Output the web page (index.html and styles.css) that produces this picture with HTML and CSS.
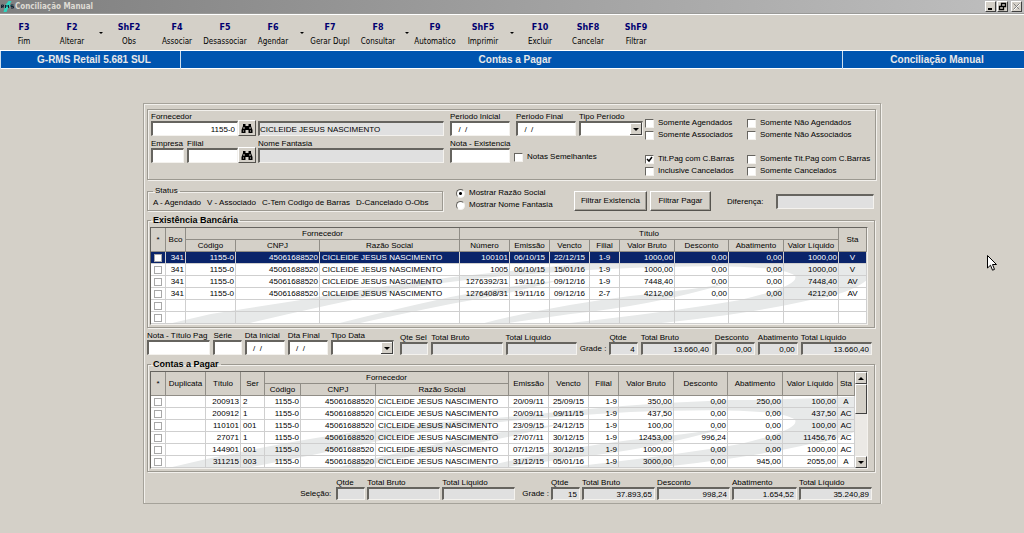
FILE: index.html
```html
<!DOCTYPE html>
<html lang="pt-BR">
<head>
<meta charset="utf-8">
<title>Conciliação Manual</title>
<link rel="stylesheet" href="styles.css">
</head>
<body>
<header class="titlebar">
  <svg class="app-icon" viewBox="0 0 14 13" aria-hidden="true"><path d="M3 12 5 5 8 1h3L9 5h3L8 7l-2 5z" fill="#2fd6c0"/><path d="M1 8V5h2v1.500H1.500L3 8M5 8V5l1.500 1.500L8 5v3M13 5h-2.500v1.500H13V8h-2.500" fill="none" stroke="#123" stroke-width="1"/></svg>
  <h1 class="title">Conciliação Manual</h1>
  <div class="winbtns">
    <button class="winbtn" aria-label="Minimizar"><svg viewBox="0 0 9 9"><path d="M2 7h4" stroke="#000" stroke-width="2"/></svg></button>
    <button class="winbtn" aria-label="Restaurar"><svg viewBox="0 0 9 9"><path d="M3.500 4V1.500h4v3H6M3 1.500h5M1.500 4.500h4v3h-4zM1 4.500h5" fill="none" stroke="#000" stroke-width="1.300"/></svg></button>
    <button class="winbtn winbtn-close" aria-label="Fechar" disabled><svg viewBox="0 0 9 9"><path d="m2 2 6 6M8 2 2 8" stroke="#fff"/><path d="m1.500 1.500 6 6m0-6-6 6" stroke="#808080"/></svg></button>
  </div>
</header>
<nav class="toolbar">
  <button class="tool"><b>F3</b><span>Fim</span></button>
  <button class="tool"><b>F2</b><span>Alterar</span></button>
  <button class="drop" aria-label="Opções de Alterar"></button>
  <button class="tool"><b>ShF2</b><span>Obs</span></button>
  <button class="tool"><b>F4</b><span>Associar</span></button>
  <button class="tool"><b>F5</b><span>Desassociar</span></button>
  <button class="tool"><b>F6</b><span>Agendar</span></button>
  <button class="drop" aria-label="Opções de Agendar"></button>
  <button class="tool"><b>F7</b><span>Gerar Dupl</span></button>
  <button class="tool"><b>F8</b><span>Consultar</span></button>
  <button class="drop" aria-label="Opções de Consultar"></button>
  <button class="tool"><b>F9</b><span>Automatico</span></button>
  <button class="tool"><b>ShF5</b><span>Imprimir</span></button>
  <button class="drop" aria-label="Opções de Imprimir"></button>
  <button class="tool"><b>F10</b><span>Excluir</span></button>
  <button class="tool"><b>ShF8</b><span>Cancelar</span></button>
  <button class="tool"><b>ShF9</b><span>Filtrar</span></button>
</nav>
<div class="banner"><div>G-RMS Retail 5.681 SUL</div><div>Contas a Pagar</div><div>Conciliação Manual</div></div>

<main class="panel">
  <section class="filters etched">
    <div class="filter-fields">
      <div class="row">
        <div class="field w-code"><label for="forn">Fornecedor</label><input id="forn" class="num" value="1155-0"></div>
        <button class="find" aria-label="Buscar fornecedor"><svg viewBox="0 0 12 11"><path d="M2 1h2.500v2h3V1H10v2l1.500 4v3H7.500V7h-3v3H.5V7L2 3z"/><path d="M3 4v2M9 4v2M2 8h1M9 8h1" stroke="#d4d0c8" fill="none"/></svg></button>
        <div class="field grow"><label for="nome">&nbsp;</label><input id="nome" class="ro" readonly value="CICLEIDE JESUS NASCIMENTO"></div>
        <div class="field w-date"><label for="pini">Periodo Inicial</label><input id="pini" value="  /  /"></div>
        <div class="field w-date"><label for="pfim">Periodo Final</label><input id="pfim" value="  /  /"></div>
        <div class="field w-type"><label for="tper">Tipo Período</label><select id="tper"><option></option></select></div>
      </div>
      <div class="row">
        <div class="field w-emp"><label for="emp">Empresa</label><input id="emp"></div>
        <div class="field w-fil"><label for="fil">Filial</label><input id="fil"></div>
        <button class="find" aria-label="Buscar filial"><svg viewBox="0 0 12 11"><path d="M2 1h2.500v2h3V1H10v2l1.500 4v3H7.500V7h-3v3H.5V7L2 3z"/><path d="M3 4v2M9 4v2M2 8h1M9 8h1" stroke="#d4d0c8" fill="none"/></svg></button>
        <div class="field grow"><label for="fant">Nome Fantasia</label><input id="fant" class="ro" readonly></div>
        <div class="field w-date"><label for="nota">Nota - Existencia</label><input id="nota"></div>
        <label class="check w-similar"><input type="checkbox">Notas Semelhantes</label>
      </div>
    </div>
    <div class="checks">
      <label class="check"><input type="checkbox">Somente Agendados</label>
      <label class="check"><input type="checkbox">Somente Não Agendados</label>
      <label class="check"><input type="checkbox">Somente Associados</label>
      <label class="check"><input type="checkbox">Somente Não Associados</label>
      <label class="check second"><input type="checkbox" checked>Tit.Pag com C.Barras</label>
      <label class="check second"><input type="checkbox">Somente Tit.Pag com C.Barras</label>
      <label class="check"><input type="checkbox">Inclusive Cancelados</label>
      <label class="check"><input type="checkbox">Somente Cancelados</label>
    </div>
  </section>

  <section class="options">
    <fieldset class="status etched"><legend>Status</legend><div class="status-list"><span>A - Agendado</span><span>V - Associado</span><span>C-Tem Codigo de Barras</span><span>D-Cancelado O-Obs</span></div></fieldset>
    <div class="radios">
      <label class="check"><input type="radio" name="show" checked>Mostrar Razão Social</label>
      <label class="check"><input type="radio" name="show">Mostrar Nome Fantasia</label>
    </div>
    <div class="actions"><button class="btn btn-wide">Filtrar Existencia</button><button class="btn">Filtrar Pagar</button></div>
    <div class="diff"><label for="dif">Diferença:</label><input id="dif" class="ro dif" readonly></div>
  </section>

  <fieldset class="group etched">
    <legend>Existência Bancária</legend>
    <div class="grid-wrap">
      <svg class="swoosh" viewBox="0 0 717 72" preserveAspectRatio="none" aria-hidden="true"><path d="M17 72 60 62 150 48Q260 28 370 18 470 6 580 4 650 4 717 0V28Q700 42 660 48 600 62 500 72H410Q520 60 590 48 650 34 645 24 630 10 480 16 340 22 260 36 170 54 95 72zM185 72Q240 58 300 45 350 35 410 28 360 42 300 52 250 62 205 72zM330 72Q400 54 480 44 540 38 575 32 500 54 420 62L350 72z"/></svg>
      <table class="grid">
        <colgroup><col class="c15"><col class="c20"><col class="c50"><col class="c84"><col><col class="c50"><col class="c40"><col class="c40"><col class="c30"><col class="c55"><col class="c54"><col class="c55"><col class="c55"><col class="c28"></colgroup>
        <thead>
          <tr><th rowspan="2">*</th><th rowspan="2">Bco</th><th colspan="3">Fornecedor</th><th colspan="8">Título</th><th rowspan="2">Sta</th></tr>
          <tr><th>Código</th><th>CNPJ</th><th>Razão Social</th><th>Número</th><th>Emissão</th><th>Vencto</th><th>Filial</th><th>Valor Bruto</th><th>Desconto</th><th>Abatimento</th><th>Valor Líquido</th></tr>
        </thead>
        <tbody>
          <tr class="selected"><td><input type="checkbox" aria-label="Título 100101"></td><td>341</td><td>1155-0</td><td>45061688520</td><td class="l">CICLEIDE JESUS NASCIMENTO</td><td>100101</td><td class="c">06/10/15</td><td class="c">22/12/15</td><td class="c">1-9</td><td>1000,00</td><td>0,00</td><td>0,00</td><td>1000,00</td><td class="c">V</td></tr>
          <tr><td><input type="checkbox" aria-label="Título 1005"></td><td>341</td><td>1155-0</td><td>45061688520</td><td class="l">CICLEIDE JESUS NASCIMENTO</td><td>1005</td><td class="c">06/10/15</td><td class="c">15/01/16</td><td class="c">1-9</td><td>1000,00</td><td>0,00</td><td>0,00</td><td>1000,00</td><td class="c">V</td></tr>
          <tr><td><input type="checkbox" aria-label="Título 1276392/31"></td><td>341</td><td>1155-0</td><td>45061688520</td><td class="l">CICLEIDE JESUS NASCIMENTO</td><td>1276392/31</td><td class="c">19/11/16</td><td class="c">09/12/16</td><td class="c">1-9</td><td>7448,40</td><td>0,00</td><td>0,00</td><td>7448,40</td><td class="c">AV</td></tr>
          <tr><td><input type="checkbox" aria-label="Título 1276408/31"></td><td>341</td><td>1155-0</td><td>45061688520</td><td class="l">CICLEIDE JESUS NASCIMENTO</td><td>1276408/31</td><td class="c">19/11/16</td><td class="c">09/12/16</td><td class="c">2-7</td><td>4212,00</td><td>0,00</td><td>0,00</td><td>4212,00</td><td class="c">AV</td></tr>
          <tr><td><input type="checkbox" aria-label="Linha 5"></td><td></td><td></td><td></td><td></td><td></td><td></td><td></td><td></td><td></td><td></td><td></td><td></td><td></td></tr>
          <tr><td><input type="checkbox" aria-label="Linha 6"></td><td></td><td></td><td></td><td></td><td></td><td></td><td></td><td></td><td></td><td></td><td></td><td></td><td></td></tr>
        </tbody>
      </table>
    </div>
  </fieldset>

  <section class="totals">
    <div class="field w64"><label for="ntp">Nota - Título Pag</label><input id="ntp"></div>
    <div class="field w28"><label for="ser">Série</label><input id="ser"></div>
    <div class="field w40"><label for="dti">Dta Inicial</label><input id="dti" value="  /  /"></div>
    <div class="field w40"><label for="dtf">Dta Final</label><input id="dtf" value="  /  /"></div>
    <div class="field w64"><label for="tdt">Tipo Data</label><select id="tdt"><option></option></select></div>
    <div class="field w28 after"><label for="qs">Qte Sel</label><input id="qs" class="ro" readonly></div>
    <div class="field w72"><label for="tb1">Total Bruto</label><input id="tb1" class="ro" readonly></div>
    <div class="field w72"><label for="tl1">Total Líquido</label><input id="tl1" class="ro" readonly></div>
    <span class="caption caption-auto">Grade :</span>
    <div class="field w28"><label for="q2">Qtde</label><input id="q2" class="ro num" readonly value="4"></div>
    <div class="field w72"><label for="tb2">Total Bruto</label><input id="tb2" class="ro num" readonly value="13.660,40"></div>
    <div class="field w40"><label for="d2">Desconto</label><input id="d2" class="ro num" readonly value="0,00"></div>
    <div class="field w40"><label for="a2">Abatimento</label><input id="a2" class="ro num" readonly value="0,00"></div>
    <div class="field w72"><label for="tl2">Total Líquido</label><input id="tl2" class="ro num" readonly value="13.660,40"></div>
  </section>

  <fieldset class="group etched">
    <legend>Contas a Pagar</legend>
    <div class="grid-wrap">
      <svg class="swoosh" viewBox="0 0 717 72" preserveAspectRatio="none" aria-hidden="true"><path d="M17 72 60 62 120 50Q220 30 370 20 470 8 580 4 650 4 717 0V28Q700 42 660 48 600 62 500 72H410Q520 60 590 48 650 34 645 24 630 10 480 16 340 24 260 38 170 58 95 72zM185 72Q240 58 300 45 350 35 410 28 360 42 300 52 250 62 205 72zM330 72Q400 54 480 44 540 38 575 32 500 54 420 62L350 72z"/></svg>
      <table class="grid">
        <colgroup><col class="c15"><col class="c40"><col class="c35"><col class="c24"><col class="c36"><col class="c75"><col><col class="c40"><col class="c40"><col class="c30"><col class="c55"><col class="c54"><col class="c55"><col class="c55"><col class="c17"></colgroup>
        <thead>
          <tr><th rowspan="2">*</th><th rowspan="2">Duplicata</th><th rowspan="2">Título</th><th rowspan="2">Ser</th><th colspan="3">Fornecedor</th><th rowspan="2">Emissão</th><th rowspan="2">Vencto</th><th rowspan="2">Filial</th><th rowspan="2">Valor Bruto</th><th rowspan="2">Desconto</th><th rowspan="2">Abatimento</th><th rowspan="2">Valor Líquido</th><th rowspan="2">Sta</th></tr>
          <tr><th>Código</th><th>CNPJ</th><th>Razão Social</th></tr>
        </thead>
        <tbody>
          <tr><td><input type="checkbox" aria-label="Título 200913"></td><td></td><td>200913</td><td class="l">2</td><td>1155-0</td><td>45061688520</td><td class="l">CICLEIDE JESUS NASCIMENTO</td><td class="c">20/09/11</td><td class="c">25/09/15</td><td>1-9</td><td>350,00</td><td>0,00</td><td>250,00</td><td>100,00</td><td class="c">A</td></tr>
          <tr><td><input type="checkbox" aria-label="Título 200912"></td><td></td><td>200912</td><td class="l">1</td><td>1155-0</td><td>45061688520</td><td class="l">CICLEIDE JESUS NASCIMENTO</td><td class="c">20/09/11</td><td class="c">09/11/15</td><td>1-9</td><td>437,50</td><td>0,00</td><td>0,00</td><td>437,50</td><td class="c">AC</td></tr>
          <tr><td><input type="checkbox" aria-label="Título 110101"></td><td></td><td>110101</td><td class="l">001</td><td>1155-0</td><td>45061688520</td><td class="l">CICLEIDE JESUS NASCIMENTO</td><td class="c">23/09/15</td><td class="c">24/12/15</td><td>1-9</td><td>100,00</td><td>0,00</td><td>0,00</td><td>100,00</td><td class="c">AC</td></tr>
          <tr><td><input type="checkbox" aria-label="Título 27071"></td><td></td><td>27071</td><td class="l">1</td><td>1155-0</td><td>45061688520</td><td class="l">CICLEIDE JESUS NASCIMENTO</td><td class="c">27/07/11</td><td class="c">30/12/15</td><td>1-9</td><td>12453,00</td><td>996,24</td><td>0,00</td><td>11456,76</td><td class="c">AC</td></tr>
          <tr><td><input type="checkbox" aria-label="Título 144901"></td><td></td><td>144901</td><td class="l">001</td><td>1155-0</td><td>45061688520</td><td class="l">CICLEIDE JESUS NASCIMENTO</td><td class="c">07/12/15</td><td class="c">30/12/15</td><td>1-9</td><td>1000,00</td><td>0,00</td><td>0,00</td><td>1000,00</td><td class="c">AC</td></tr>
          <tr><td><input type="checkbox" aria-label="Título 311215"></td><td></td><td>311215</td><td class="l">003</td><td>1155-0</td><td>45061688520</td><td class="l">CICLEIDE JESUS NASCIMENTO</td><td class="c">31/12/15</td><td class="c">05/01/16</td><td>1-9</td><td>3000,00</td><td>0,00</td><td>945,00</td><td>2055,00</td><td class="c">A</td></tr>
        </tbody>
      </table>
      <div class="scroll"><button class="sbtn up" aria-label="Subir"></button><div class="thumb"></div><button class="sbtn down" aria-label="Descer"></button></div>
    </div>
  </fieldset>

  <section class="totals totals-end">
    <span class="caption">Seleção:</span>
    <div class="field w28 after"><label for="q3">Qtde</label><input id="q3" class="ro" readonly></div>
    <div class="field w72"><label for="tb3">Total Bruto</label><input id="tb3" class="ro" readonly></div>
    <div class="field w72"><label for="tl3">Total Líquido</label><input id="tl3" class="ro" readonly></div>
    <span class="caption caption-grade">Grade :</span>
    <div class="field w28"><label for="q4">Qtde</label><input id="q4" class="ro num" readonly value="15"></div>
    <div class="field w72"><label for="tb4">Total Bruto</label><input id="tb4" class="ro num" readonly value="37.893,65"></div>
    <div class="field w72"><label for="d4">Desconto</label><input id="d4" class="ro num" readonly value="998,24"></div>
    <div class="field w64"><label for="a4">Abatimento</label><input id="a4" class="ro num" readonly value="1.654,52"></div>
    <div class="field w72"><label for="tl4">Total Líquido</label><input id="tl4" class="ro num" readonly value="35.240,89"></div>
  </section>
</main>
<svg class="pointer" viewBox="0 0 10 17" aria-hidden="true"><path d="M.5.500v12.500l3-2.800 2 5 2-.8-2-4.900h4z" fill="#fff" stroke="#000"/></svg>
</body>
</html>
```
FILE: styles.css
```css
* { box-sizing: border-box; }
body {
  margin: 0;
  background: #d4d0c8;
  color: #000;
  font: 8px/12px "Liberation Sans", Arial, sans-serif;
}
button, input, select { font: inherit; color: inherit; margin: 0; padding: 0; border: 0; border-radius: 0; }
svg { display: block; }

.titlebar {
  display: flex;
  align-items: center;
  height: 14px;
  padding-right: 2px;
  background: linear-gradient(90deg, #7f7f7f, #bfbfbf);
  border-bottom: 1px solid #9a9a98;
}
.app-icon { width: 15px; height: 13px; }
.title {
  flex: 1;
  margin: 0;
  color: #dedbd4;
  font: bold 8px/12px "DejaVu Sans Condensed", "DejaVu Sans", sans-serif;
}
.winbtns { display: flex; gap: 1px; }
.winbtn {
  width: 11px;
  height: 11px;
  background: #d4d0c8;
  border: 1px solid;
  border-color: #fff #404040 #404040 #fff;
}
.winbtn-close { margin-left: 2px; }

.toolbar {
  display: flex;
  height: 36px;
  padding-top: 7px;
  border-top: 1px solid #fff;
}
.tool {
  display: flex;
  flex-direction: column;
  align-items: center;
  gap: 2px;
  width: 48px;
  background: none;
  white-space: nowrap;
  font: 8px/12px "DejaVu Sans Condensed", "DejaVu Sans", sans-serif;
}
.tool b { color: #000070; font: bold 8px/12px "DejaVu Sans", sans-serif; }
.drop { display: grid; place-items: center; width: 9px; height: 21px; background: none; }
.drop::before { content: ""; border: 2px solid transparent; border-top-color: #000; border-bottom: 0; }

.banner {
  display: grid;
  grid-template-columns: 180px 1fr 182px;
  height: 19px;
  background: #0055b0;
  border-top: 1px solid #fff;
  border-bottom: 1px solid #fff;
  color: #e8e8e8;
  font: bold 10px/18px "Liberation Sans", sans-serif;
  text-align: center;
}
.banner div { padding-left: 7px; border-left: 1px solid #cfe0f0; }

.panel {
  max-width: 738px;
  margin: 34px auto 0;
  padding: 5px 4px 3px 3px;
  border: 1px solid #a5a29a;
  box-shadow: inset 1px 1px #f2f0ec, 1px 1px #f2f0ec;
}
.etched {
  margin: 0;
  border: 1px solid #9c9991;
  box-shadow: inset 1px 1px #f2f0ec, 1px 1px #f2f0ec;
}

.filters { display: flex; justify-content: space-between; height: 71px; padding: 1px 4px 0 3px; }
.filter-fields { display: flex; flex-direction: column; gap: 2px; width: 492px; }
.row { display: flex; align-items: flex-end; }
.field { display: flex; flex-direction: column; min-width: 0; }
.field label { height: 10px; line-height: 12px; white-space: pre; }
.field input, .field select, .dif {
  width: 100%;
  height: 15px;
  padding: 0 2px;
  background: #fff;
  border: 1px solid;
  border-width: 2px 1px 1px 2px;
  border-color: #66645f #f4f2ee #f4f2ee #66645f;
}
.field input { white-space: pre; }
.field .ro, .dif { background: #e0e0e0; }
.field .num { text-align: right; }
#nome { padding-left: 0; }
.field select {
  appearance: none;
  background-repeat: no-repeat;
  background-image: url("data:image/svg+xml,%3Csvg xmlns='http://www.w3.org/2000/svg' width='12' height='12'%3E%3Cpath d='M0 0h12v12H0z' fill='%23404040'/%3E%3Cpath d='M0 0h11v11H0z' fill='%23fff'/%3E%3Cpath d='M1 1h10v10H1z' fill='%23d4d0c8'/%3E%3Cpath d='M3 5h6L6 8z'/%3E%3C/svg%3E");
  background-position: right center;
}
.w-code { width: 87px; }
.w-emp { width: 33px; margin-right: 3px; }
.w-fil { width: 51px; }
.w-date { width: 60px; margin-left: 6px; }
.w-type { width: 64px; margin-left: 3px; }
.grow { flex: 1; margin-left: 2px; }
.w-similar { width: 133px; padding-left: 4px; }
.find {
  display: grid;
  place-items: center;
  width: 18px;
  height: 16px;
  background: #d4d0c8;
  border: 1px solid;
  border-color: #fff #55534e #55534e #fff;
}
.find svg { width: 12px; height: 11px; }

.check { display: flex; align-items: center; gap: 4px; height: 12px; white-space: nowrap; }
.check input {
  flex: none;
  appearance: none;
  width: 9px;
  height: 9px;
  background: #fff;
  border: 1px solid;
  border-color: #66645f #f4f2ee #f4f2ee #66645f;
}
.check input[type="radio"] { border-radius: 50%; }
.check input[type="radio"]:checked { background: radial-gradient(circle, #000 0 1px, #fff 2px); }
.check input[type="checkbox"]:checked {
  background: #fff url("data:image/svg+xml,%3Csvg xmlns='http://www.w3.org/2000/svg' viewBox='0 0 7 7'%3E%3Cpath d='m1 3 2 2 3-4' fill='none' stroke='%23000' stroke-width='1.500'/%3E%3C/svg%3E");
}
.checks { display: grid; grid-template-columns: 102px 1fr; align-content: start; padding-top: 6px; width: 226px; }
.checks .second { margin-top: 12px; }

.options { display: flex; align-items: flex-end; margin: 5px 2px 0 0; }
.status { flex: none; width: 296px; height: 26px; padding: 0 5px; }
.status-list { display: flex; gap: 6px; white-space: nowrap; }
legend { height: 12px; padding: 0 2px; }
.radios { width: 105px; margin-left: 13px; }
.actions { display: flex; gap: 3px; margin-left: 13px; }
.btn {
  width: 61px;
  height: 20px;
  background: #d4d0c8;
  border: 1px solid;
  border-color: #fff #55534e #55534e #fff;
  box-shadow: inset -1px -1px #a09d95;
  white-space: nowrap;
}
.btn-wide { width: 73px; }
.diff { display: flex; flex: 1; align-items: center; gap: 13px; margin: 0 0 2px 16px; }
.dif { flex: 1; min-width: 0; }

.group { min-width: 0; margin-top: 3px; margin-right: 1px; padding: 1px 6px 2px 2px; }
.group legend { margin-left: 1px; font: bold 9px/12px "Liberation Sans", sans-serif; }
.grid-wrap {
  position: relative;
  display: flex;
  background: #fff;
  border: 1px solid;
  border-color: #66645f #f4f2ee #f4f2ee #66645f;
}
.swoosh { position: absolute; left: 0; bottom: 0; width: 100%; height: 72px; fill: #e7e9e9; }
.grid { position: relative; flex: 1; table-layout: fixed; width: 100%; border-collapse: separate; border-spacing: 0; }
.grid th {
  height: 12px;
  padding: 0;
  background: #d4d0c8;
  border-right: 1px solid #908d86;
  border-bottom: 1px solid #908d86;
  font-weight: normal;
  line-height: 11px;
  white-space: nowrap;
}
.grid td {
  height: 12px;
  padding: 0 1px;
  border-right: 1px solid #cfcfcf;
  border-bottom: 1px solid #cfcfcf;
  line-height: 11px;
  text-align: right;
  white-space: nowrap;
}
.grid .l { text-align: left; padding-left: 2px; }
.grid .c { text-align: center; }
.grid .selected td { background: #0a246a; color: #fff; }
.grid input { appearance: none; display: block; width: 8px; height: 8px; margin: 0 auto; background: #fff; border: 1px solid #a8a8a8; }
.c15 { width: 15px; } .c17 { width: 17px; } .c20 { width: 20px; } .c24 { width: 24px; }
.c28 { width: 28px; } .c30 { width: 30px; } .c35 { width: 35px; } .c36 { width: 36px; }
.c40 { width: 40px; } .c50 { width: 50px; } .c54 { width: 54px; } .c55 { width: 55px; }
.c75 { width: 75px; } .c84 { width: 84px; }
.scroll { position: relative; display: flex; flex-direction: column; width: 12px; background: #ebe9e5; }
.sbtn, .thumb { background-color: #d4d0c8; border: 1px solid; border-color: #fff #404040 #404040 #fff; }
.sbtn { display: grid; place-items: center; height: 12px; }
.sbtn::before { content: ""; border: 3px solid transparent; }
.up::before { border-bottom-color: #000; border-top: 0; }
.down::before { border-top-color: #000; border-bottom: 0; }
.thumb { height: 30px; }
.down { margin-top: auto; }

.totals { display: flex; align-items: flex-end; gap: 3px; margin: 2px 4px 0 0; }
.totals .ro { height: 13px; }
.totals-end { justify-content: flex-end; gap: 2px; margin-top: 5px; }
.w28 { width: 29px; } .w40 { width: 41px; } .w64 { width: 65px; } .w72 { width: 73px; }
.after { margin-left: 3px; }
.caption { white-space: nowrap; }
.caption-auto { margin-left: auto; }
.caption-grade { margin-left: 5px; }

.pointer { position: absolute; left: 987px; top: 255px; width: 10px; height: 17px; }
```
